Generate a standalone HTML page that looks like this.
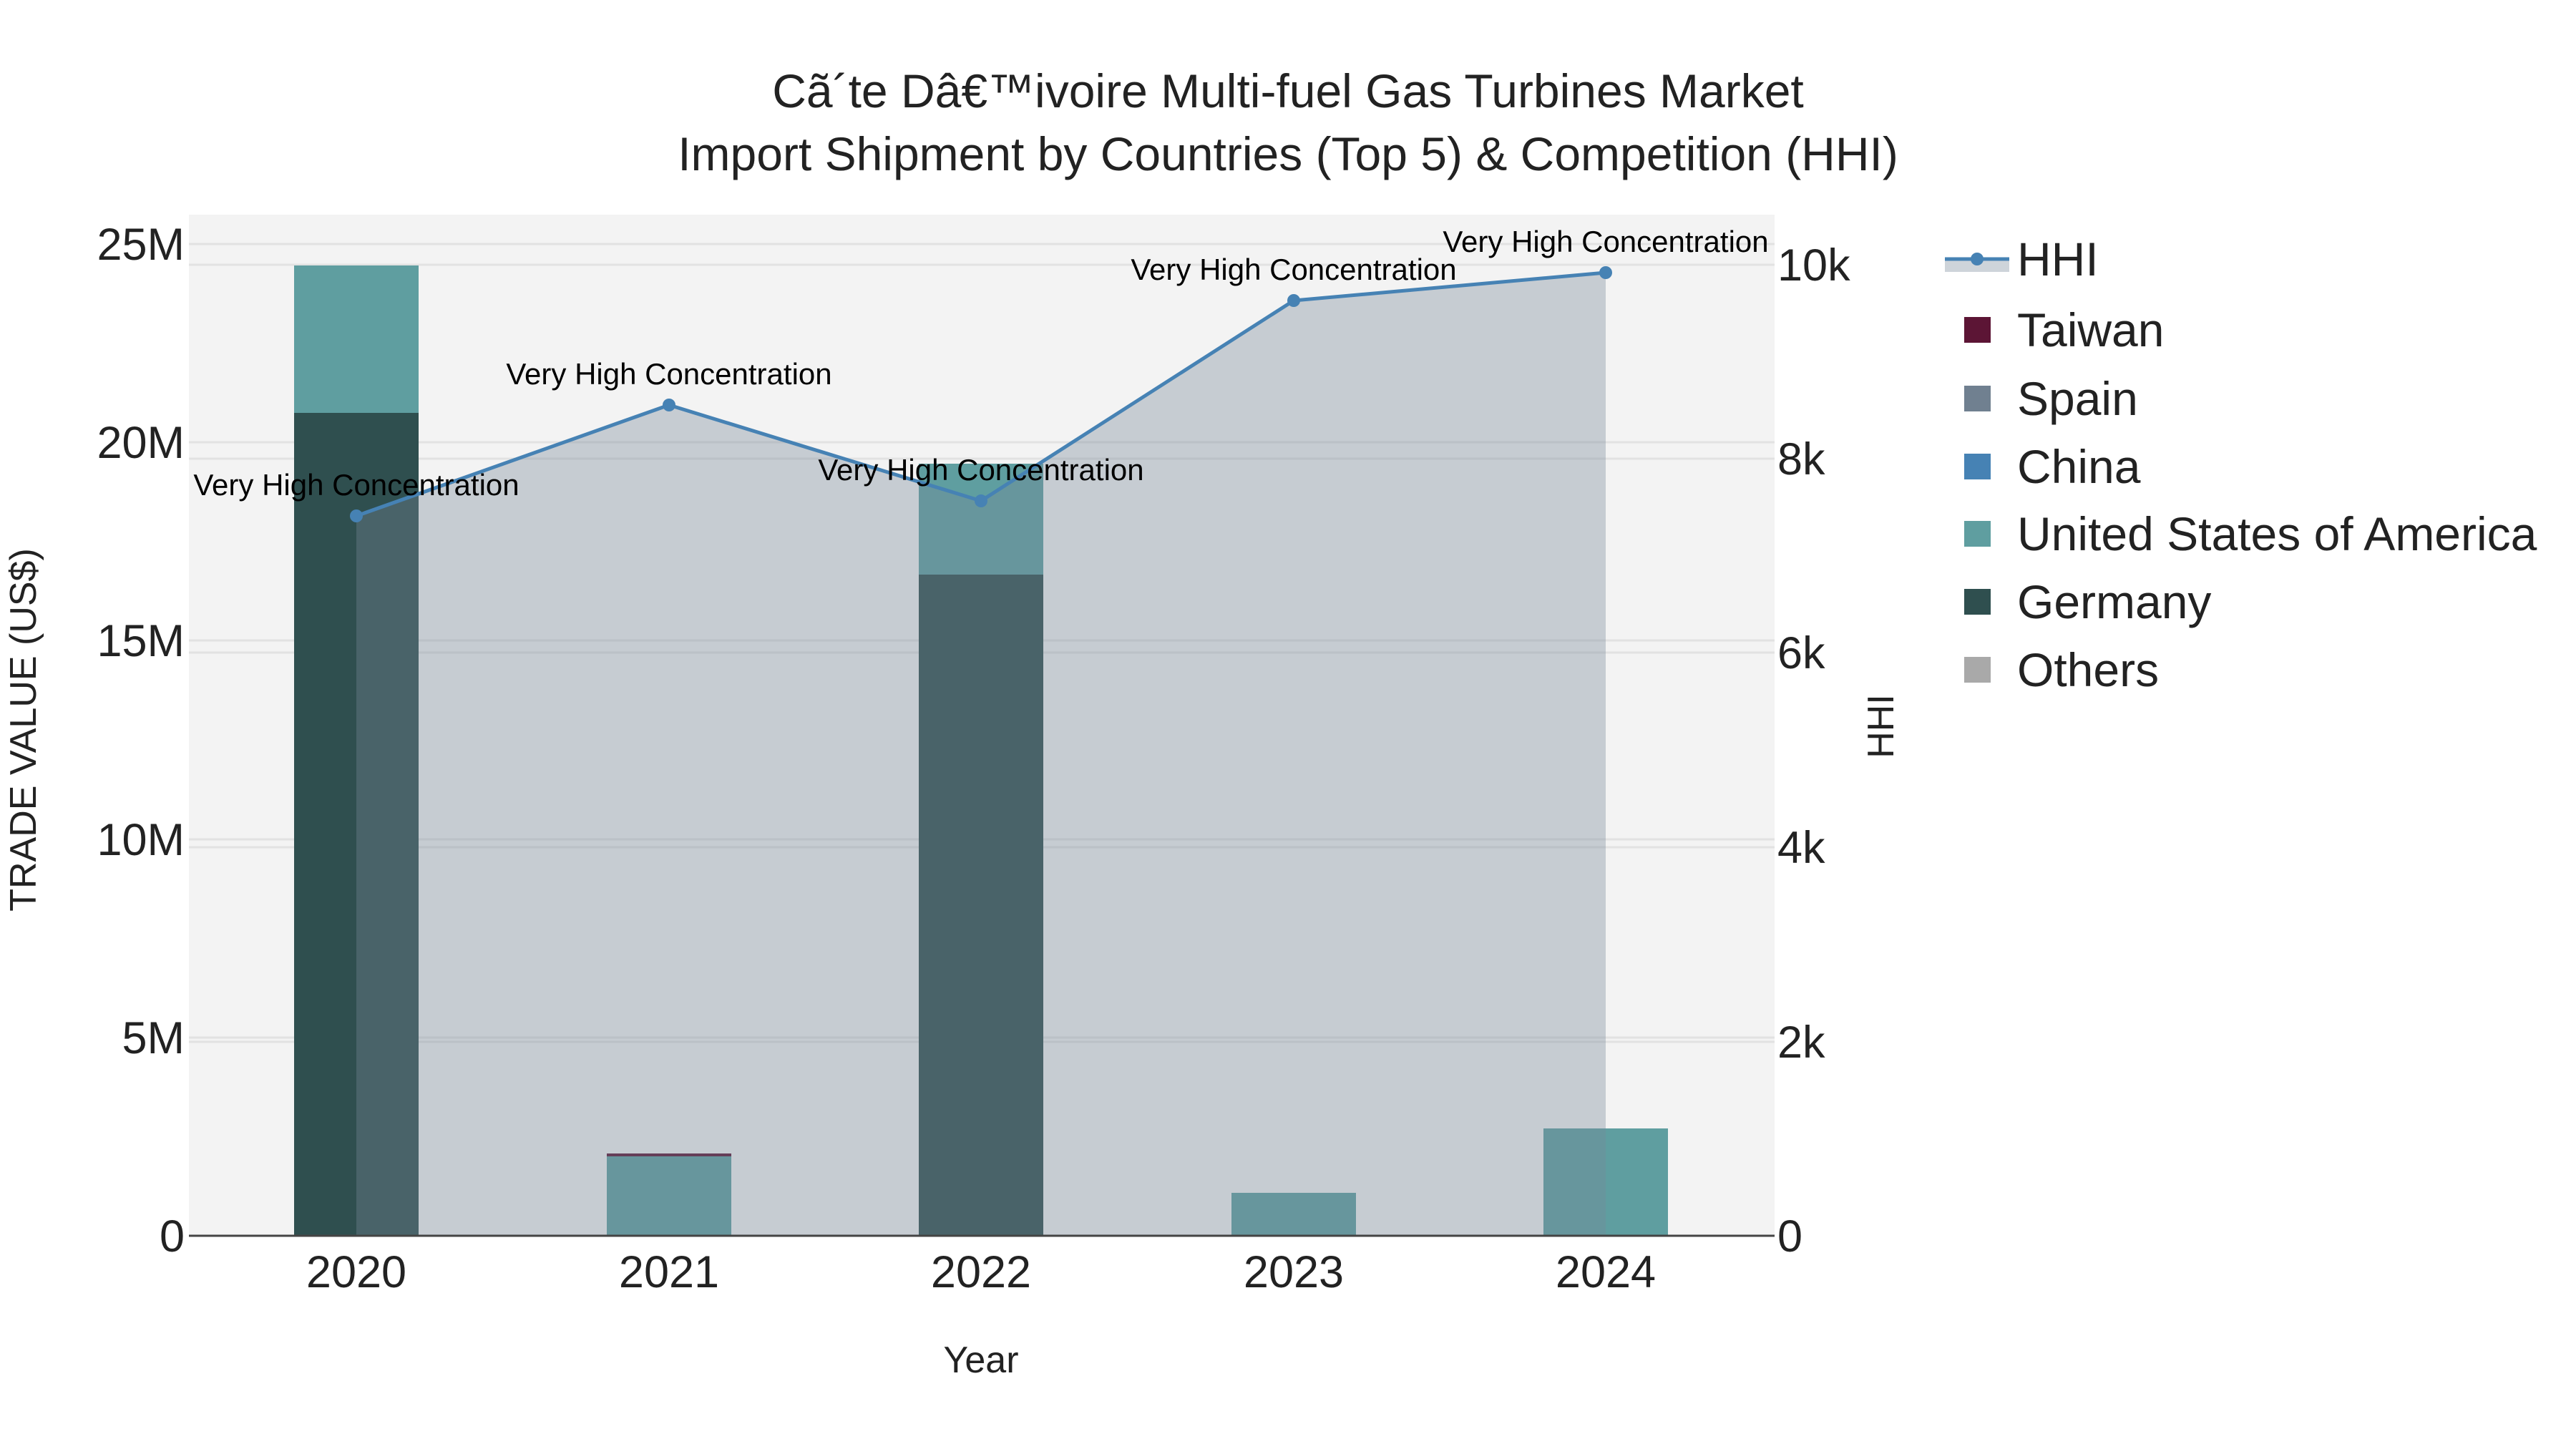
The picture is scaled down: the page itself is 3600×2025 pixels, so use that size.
<!DOCTYPE html>
<html><head><meta charset="utf-8"><style>
html,body{margin:0;padding:0;background:#fff;}
svg{display:block;font-family:"Liberation Sans",sans-serif;}
</style></head><body>
<svg width="3600" height="2025" viewBox="0 0 3600 2025" xmlns="http://www.w3.org/2000/svg">
<rect width="3600" height="2025" fill="#fff"/>
<rect x="264" y="300" width="2216" height="1428" fill="#f3f3f3"/>
<g stroke="#e2e2e2" stroke-width="3">
<line x1="264" x2="2480" y1="341" y2="341"/>
<line x1="264" x2="2480" y1="618" y2="618"/>
<line x1="264" x2="2480" y1="895" y2="895"/>
<line x1="264" x2="2480" y1="1173" y2="1173"/>
<line x1="264" x2="2480" y1="1450" y2="1450"/>
<line x1="264" x2="2480" y1="370" y2="370"/>
<line x1="264" x2="2480" y1="641" y2="641"/>
<line x1="264" x2="2480" y1="912" y2="912"/>
<line x1="264" x2="2480" y1="1184" y2="1184"/>
<line x1="264" x2="2480" y1="1456" y2="1456"/>
</g>
<rect x="411" y="577" width="174" height="1150" fill="#2f4f4f"/>
<rect x="411" y="371" width="174" height="206" fill="#5f9ea0"/>
<rect x="848" y="1616" width="174" height="111" fill="#5f9ea0"/>
<rect x="848" y="1612" width="174" height="4" fill="#5c1535"/>
<rect x="1284" y="803" width="174" height="924" fill="#2f4f4f"/>
<rect x="1284" y="648" width="174" height="155" fill="#5f9ea0"/>
<rect x="1721" y="1667" width="174" height="60" fill="#5f9ea0"/>
<rect x="2157" y="1577" width="174" height="150" fill="#5f9ea0"/>
<polygon points="498,721 935,566 1371,700 1808,420 2244,381 2244,1727 498,1727" fill="rgb(119,136,153)" fill-opacity="0.36"/>
<line x1="264" x2="2480" y1="1727" y2="1727" stroke="#444" stroke-width="3"/>
<polyline points="498,721 935,566 1371,700 1808,420 2244,381" fill="none" stroke="#4682b4" stroke-width="5"/>
<g fill="#4682b4">
<circle cx="498" cy="721" r="9"/><circle cx="935" cy="566" r="9"/><circle cx="1371" cy="700" r="9"/><circle cx="1808" cy="420" r="9"/><circle cx="2244" cy="381" r="9"/>
</g>
<g font-size="42" fill="#000" text-anchor="middle">
<text x="498" y="692">Very High Concentration</text>
<text x="935" y="537">Very High Concentration</text>
<text x="1371" y="671">Very High Concentration</text>
<text x="1808" y="391">Very High Concentration</text>
<text x="2244" y="352">Very High Concentration</text>
</g>
<g font-size="63" fill="#222" text-anchor="end">
<text x="258" y="363">25M</text>
<text x="258" y="640">20M</text>
<text x="258" y="917">15M</text>
<text x="258" y="1195">10M</text>
<text x="258" y="1472">5M</text>
<text x="258" y="1749">0</text>
</g>
<g font-size="63" fill="#222">
<text x="2484" y="392">10k</text>
<text x="2484" y="663">8k</text>
<text x="2484" y="934">6k</text>
<text x="2484" y="1206">4k</text>
<text x="2484" y="1478">2k</text>
<text x="2484" y="1749">0</text>
</g>
<g font-size="63" fill="#222" text-anchor="middle">
<text x="498" y="1799">2020</text>
<text x="935" y="1799">2021</text>
<text x="1371" y="1799">2022</text>
<text x="1808" y="1799">2023</text>
<text x="2244" y="1799">2024</text>
</g>
<text x="1371" y="1918" font-size="52" fill="#222" text-anchor="middle">Year</text>
<text transform="translate(50,1020) rotate(-90)" font-size="52" fill="#222" text-anchor="middle">TRADE VALUE (US$)</text>
<text transform="translate(2646,1015) rotate(-90)" font-size="52" fill="#222" text-anchor="middle">HHI</text>
<g font-size="66" fill="#222" text-anchor="middle">
<text x="1800" y="150">Cã´te Dâ€™ivoire Multi-fuel Gas Turbines Market</text>
<text x="1800" y="238">Import Shipment by Countries (Top 5) &amp; Competition (HHI)</text>
</g>
<rect x="2718" y="362" width="90" height="18" fill="rgb(119,136,153)" fill-opacity="0.36"/>
<line x1="2718" x2="2808" y1="362" y2="362" stroke="#4682b4" stroke-width="5"/>
<circle cx="2763" cy="362" r="9" fill="#4682b4"/>
<rect x="2745" y="443" width="37" height="36" fill="#5c1535"/>
<rect x="2745" y="539" width="37" height="36" fill="#708090"/>
<rect x="2745" y="634" width="37" height="36" fill="#4682b4"/>
<rect x="2745" y="728" width="37" height="36" fill="#5f9ea0"/>
<rect x="2745" y="823" width="37" height="36" fill="#2f4f4f"/>
<rect x="2745" y="918" width="37" height="36" fill="#a9a9a9"/>
<g font-size="66" fill="#222">
<text x="2819" y="385">HHI</text>
<text x="2819" y="484">Taiwan</text>
<text x="2819" y="580">Spain</text>
<text x="2819" y="675">China</text>
<text x="2819" y="769">United States of America</text>
<text x="2819" y="864">Germany</text>
<text x="2819" y="959">Others</text>
</g>
</svg>
</body></html>
